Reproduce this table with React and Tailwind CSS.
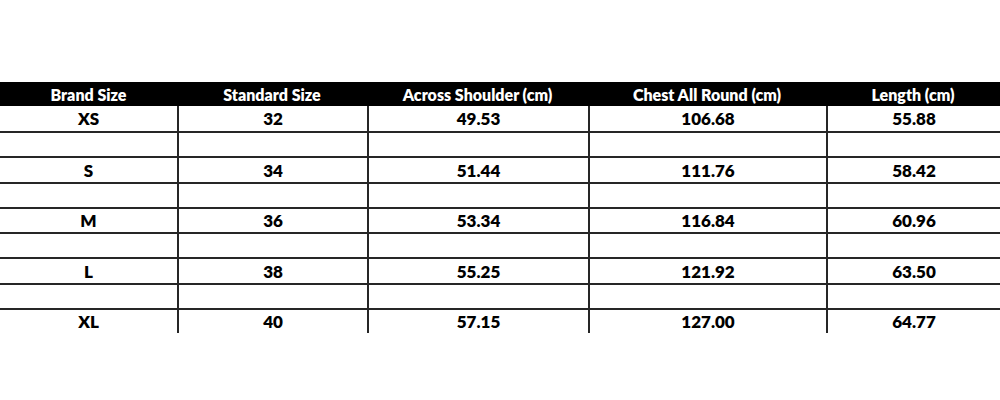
const columns = ['Brand Size', 'Standard Size', 'Across Shoulder (cm)', 'Chest All Round (cm)', 'Length (cm)'];

const sizes = [
  ['XS', '32', '49.53', '106.68', '55.88'],
  ['S', '34', '51.44', '111.76', '58.42'],
  ['M', '36', '53.34', '116.84', '60.96'],
  ['L', '38', '55.25', '121.92', '63.50'],
  ['XL', '40', '57.15', '127.00', '64.77'],
];

// data rows alternate with blank spacer rows, as in the original sheet
const rows = sizes.flatMap((r, i) => (i < sizes.length - 1 ? [r, null] : [r]));
const heights = ['h-[25px]', 'h-[25px]', 'h-[26px]', 'h-[25px]', 'h-[25px]', 'h-[25px]', 'h-[26px]', 'h-[25px]', 'h-[25px]'];

export default function App() {
  return (
    <div
      className="w-[1000px] h-[400px] bg-white pt-[82px] text-black"
      style={{ fontFamily: 'Lato, "Open Sans", sans-serif' }}
    >
      <div className="grid grid-cols-[177px_190px_221px_238px_174px] h-[24px] bg-black text-white font-extrabold text-[16px] leading-none">
        {columns.map((c) => (
          <div key={c} className="flex items-center justify-center pt-[1px]">
            {c}
          </div>
        ))}
      </div>
      {rows.map((r, i) => (
        <div
          key={i}
          className={`grid grid-cols-[177px_190px_221px_238px_174px] ${heights[i]} ${i > 0 ? 'border-t-2 border-[#262626]' : ''}`}
        >
          {columns.map((c, j) => (
            <div
              key={c}
              className={`flex items-center justify-center font-extrabold text-[17px] leading-none ${j > 0 ? 'border-l-2 border-[#262626]' : ''}`}
            >
              {r ? r[j] : ''}
            </div>
          ))}
        </div>
      ))}
    </div>
  );
}
